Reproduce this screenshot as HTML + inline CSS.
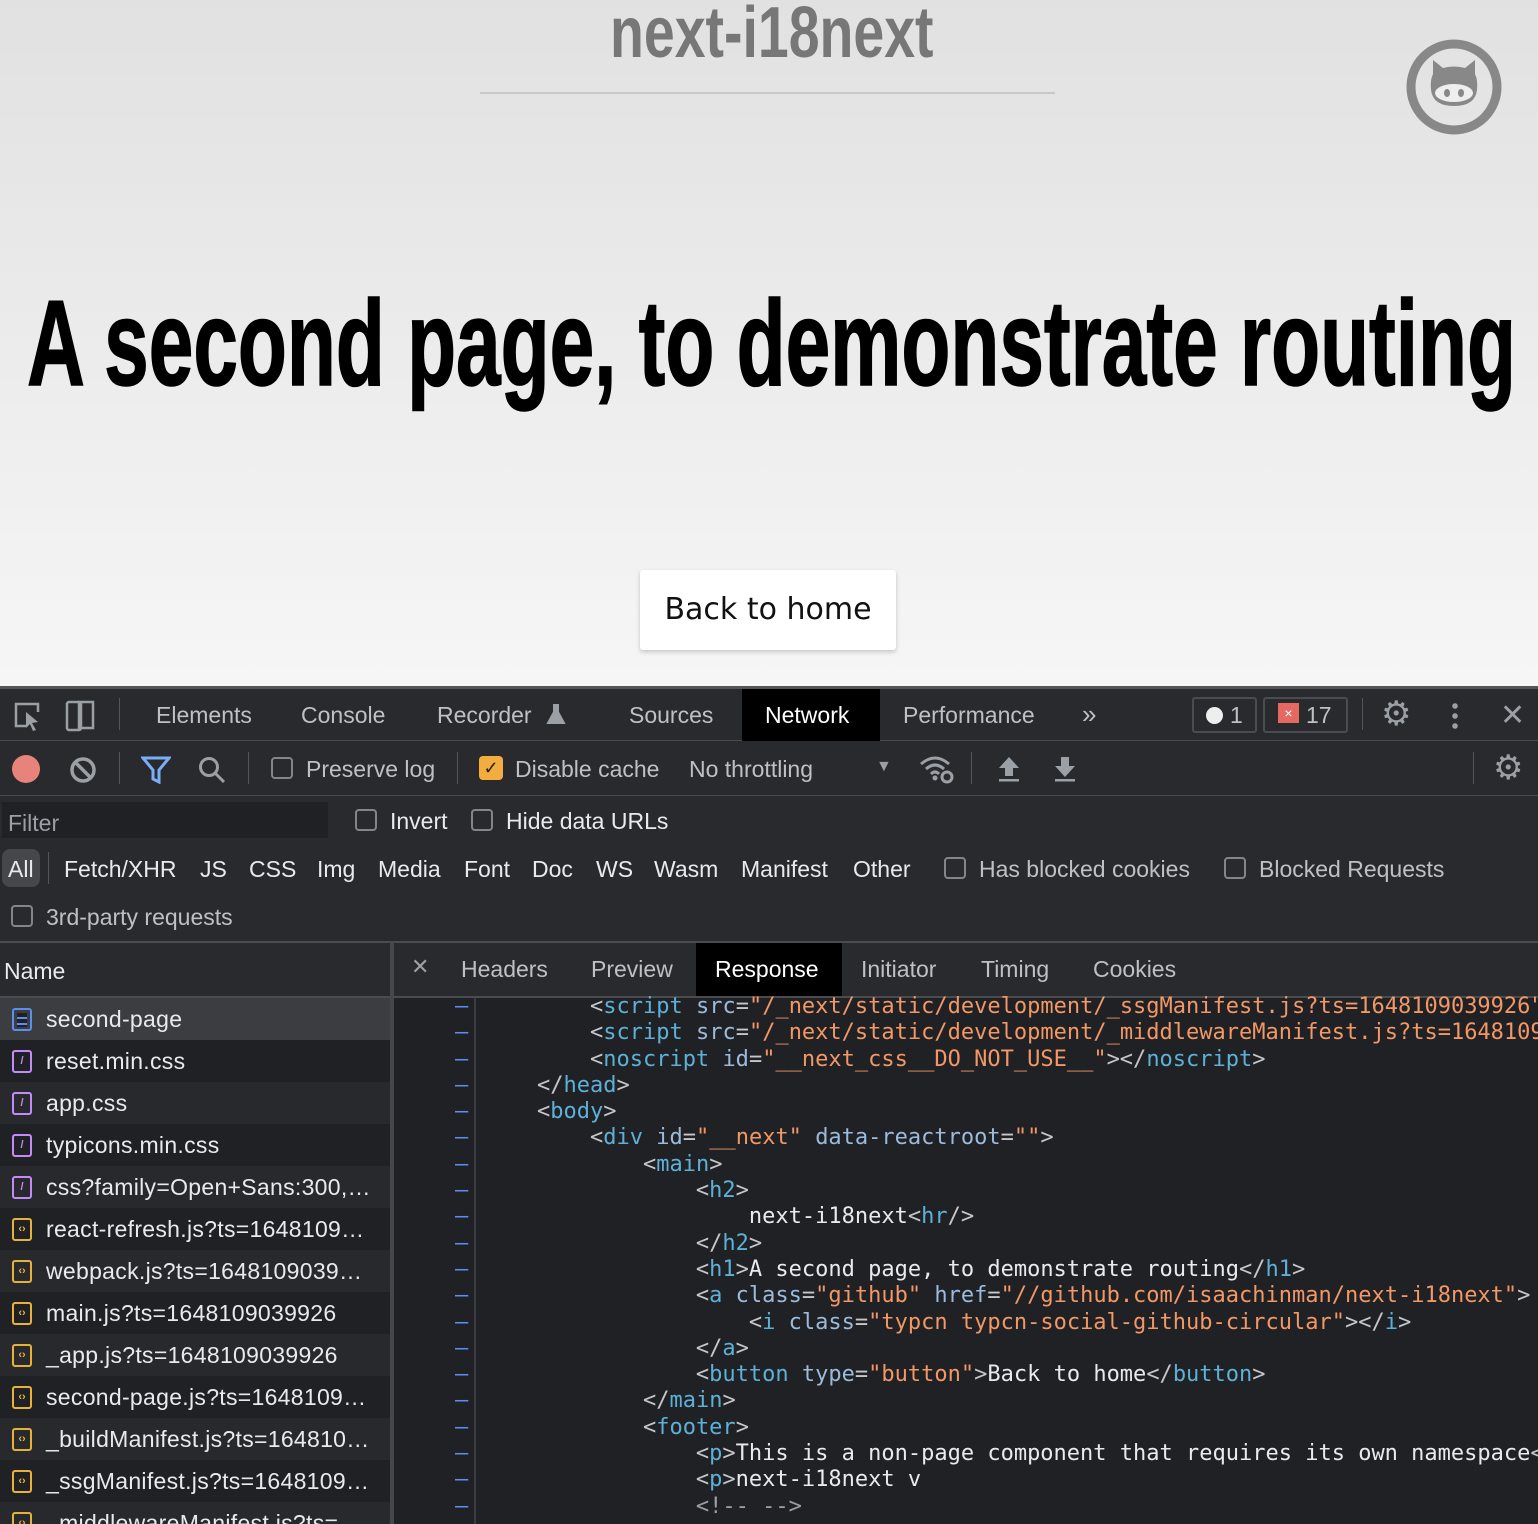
<!DOCTYPE html>
<html><head><meta charset="utf-8"><style>
*{box-sizing:border-box;margin:0;padding:0}
html,body{width:1538px;height:1524px;overflow:hidden}
body{font-family:"Liberation Sans",sans-serif;position:relative;background:#292a2d}
.page{position:absolute;left:0;top:0;width:1538px;height:686px;background:linear-gradient(#e1e1e1,#f6f6f6);overflow:hidden}
.a{position:absolute;white-space:nowrap}
.ui{color:#bdc1c6;font-size:23px}
.cb{position:absolute;width:22px;height:22px;border:2px solid #80868b;border-radius:4px}
.hl{position:absolute;left:0;height:1px;background:#494c50}
.code{position:absolute;left:484px;top:994px;font-family:"DejaVu Sans Mono","Liberation Mono",monospace;font-size:22px;line-height:26.3px;color:#e8eaed;white-space:pre}
.t{color:#5db0d7}.n{color:#9bbbdc}.v{color:#f29766}.p{color:#c5c7ca}
.row{position:absolute;left:0;width:390px;height:42px;font-size:23px;letter-spacing:0.3px;color:#e8eaed;padding-left:46px;line-height:42px;white-space:nowrap;overflow:hidden}
.ic{position:absolute;left:12px;top:10px;width:20px;height:23px;border:2px solid #c58af9;border-radius:3px;font-size:11px;line-height:19px;text-align:center;letter-spacing:0;font-weight:bold}
.ic.c{color:#c58af9}
.ic.j{border-color:#e8b23a;color:#e8b23a}
.ic.d{border-color:#5b8ef0;background:repeating-linear-gradient(#202124 0 4px,#5b8ef0 4px 6px) 3px 3px/10px 14px no-repeat}
</style></head><body>
<div class="page">
 <div class="a" style="left:480px;top:92px;width:575px;height:2px;background:#c8c8c8"></div>
 <div class="a" style="left:610px;top:-8px;font-family:'Liberation Sans',sans-serif;font-weight:bold;font-size:72px;color:#777;transform:scaleX(0.77);transform-origin:left">next-i18next</div>
 <div class="a" style="left:27px;top:273px;font-family:'Liberation Sans',sans-serif;font-weight:bold;font-size:122px;color:#000;transform:scaleX(0.657);transform-origin:left;-webkit-text-stroke:1.5px #000">A second page, to demonstrate routing</div>
 <svg class="a" style="left:1405px;top:38px" width="98" height="98" viewBox="0 0 98 98"><circle cx="49" cy="49" r="43" fill="none" stroke="#888" stroke-width="9"/><path d="M28 36 L28 22 L38 30 Q49 27 60 30 L70 22 L70 36 Q73 42 72 52 Q70 68 49 68 Q28 68 26 52 Q25 42 28 36Z" fill="#888"/><ellipse cx="49" cy="55" rx="19" ry="9" fill="#eee"/><ellipse cx="42" cy="55" rx="3" ry="4" fill="#888"/><ellipse cx="56" cy="55" rx="3" ry="4" fill="#888"/></svg>
 <div class="a" style="left:640px;top:570px;width:256px;height:80px;background:#fff;border-radius:3px;box-shadow:0 2px 5px rgba(0,0,0,.2);font-family:'DejaVu Sans',sans-serif;font-size:30px;line-height:80px;text-align:center;color:#111">Back to home</div>
</div>
<div class="a" style="left:0;top:686px;width:1538px;height:3px;background:#555"></div>
<div class="hl" style="top:740px;width:1538px"></div>
<div class="hl" style="top:795px;width:1538px"></div>
<div class="hl" style="top:941px;width:1538px;height:2px;background:#4a4c50"></div>
<svg class="a" style="left:12px;top:700px" width="90" height="32"><path d="M14 26H4V4h22v8" fill="none" stroke="#9aa0a6" stroke-width="2.5"/><path d="M14 12l12 10-6 1 4 7-3 1-3-7-4 4z" fill="#9aa0a6"/><rect x="55" y="2" width="14" height="28" rx="2" fill="none" stroke="#9aa0a6" stroke-width="2.5"/><rect x="67" y="2" width="14" height="26" fill="none" stroke="#9aa0a6" stroke-width="2.5"/></svg>
<div class="a" style="left:119px;top:698px;width:1px;height:32px;background:#555"></div>
<div class="a ui" style="left:156px;top:702px">Elements</div>
<div class="a ui" style="left:301px;top:702px">Console</div>
<div class="a ui" style="left:437px;top:702px">Recorder</div>
<svg class="a" style="left:546px;top:703px" width="20" height="22"><path d="M7 2h6M8 2v7L2 20h16L12 9V2" fill="#9aa0a6" stroke="#9aa0a6" stroke-width="2"/></svg>
<div class="a ui" style="left:629px;top:702px">Sources</div>
<div class="a" style="left:742px;top:689px;width:138px;height:52px;background:#000"></div>
<div class="a ui" style="left:765px;top:702px;color:#fff">Network</div>
<div class="a ui" style="left:903px;top:702px">Performance</div>
<div class="a ui" style="left:1082px;top:699px;font-size:26px">»</div>
<div class="a" style="left:1192px;top:697px;width:65px;height:36px;border:2px solid #4a4c50;border-radius:3px"></div>
<div class="a" style="left:1206px;top:707px;width:17px;height:17px;border-radius:50%;background:#eee"></div>
<div class="a ui" style="left:1230px;top:702px">1</div>
<div class="a" style="left:1263px;top:697px;width:85px;height:36px;border:2px solid #4a4c50;border-radius:3px"></div>
<div class="a" style="left:1278px;top:703px;width:21px;height:20px;background:#e46962;color:#fff;font-size:14px;text-align:center;line-height:20px">×</div>
<div class="a ui" style="left:1306px;top:702px">17</div>
<div class="a" style="left:1362px;top:698px;width:1px;height:32px;background:#555"></div>
<div class="a" style="left:1381px;top:694px;font-size:34px;color:#9aa0a6">⚙</div>
<div class="a" style="left:1452px;top:701px;width:6px;height:30px;background:radial-gradient(circle,#9aa0a6 2.5px,transparent 3px) 0 0/6px 10px"></div>
<div class="a" style="left:1500px;top:698px;font-size:30px;color:#9aa0a6">✕</div>
<div class="a" style="left:12px;top:755px;width:28px;height:28px;border-radius:50%;background:#e8837c"></div>
<svg class="a" style="left:68px;top:755px" width="30" height="30"><circle cx="15" cy="15" r="11" fill="none" stroke="#9aa0a6" stroke-width="3.5"/><path d="M7 7L23 23" stroke="#9aa0a6" stroke-width="3.5"/></svg>
<div class="a" style="left:119px;top:752px;width:1px;height:32px;background:#555"></div>
<svg class="a" style="left:141px;top:756px" width="30" height="28"><path d="M2 2h26L18 14v12l-6-3V14z" fill="none" stroke="#7cacf8" stroke-width="3"/></svg>
<svg class="a" style="left:197px;top:755px" width="30" height="30"><circle cx="12" cy="12" r="8.5" fill="none" stroke="#9aa0a6" stroke-width="3"/><path d="M18 18l9 9" stroke="#9aa0a6" stroke-width="3"/></svg>
<div class="a" style="left:248px;top:752px;width:1px;height:32px;background:#555"></div>
<div class="cb" style="left:271px;top:757px"></div>
<div class="a ui" style="left:306px;top:756px">Preserve log</div>
<div class="a" style="left:457px;top:752px;width:1px;height:32px;background:#555"></div>
<div class="a" style="left:479px;top:756px;width:24px;height:24px;border-radius:4px;background:#f3ad3f;color:#222;font-size:18px;text-align:center;line-height:24px">✓</div>
<div class="a ui" style="left:515px;top:756px">Disable cache</div>
<div class="a ui" style="left:689px;top:756px">No throttling</div>
<div class="a" style="left:876px;top:758px;font-size:16px;color:#9aa0a6">▼</div>
<svg class="a" style="left:918px;top:752px" width="38" height="32"><path d="M3 12Q17 0 31 12M8 17Q17 9 26 17M13 22Q17 18 21 22" fill="none" stroke="#9aa0a6" stroke-width="3"/><circle cx="17" cy="26" r="2.5" fill="#9aa0a6"/><circle cx="29" cy="25" r="5" fill="none" stroke="#9aa0a6" stroke-width="3"/></svg>
<div class="a" style="left:971px;top:752px;width:1px;height:32px;background:#555"></div>
<svg class="a" style="left:996px;top:755px" width="26" height="28"><path d="M13 2L3 13h6v8h8v-8h6z" fill="#9aa0a6"/><rect x="3" y="24" width="20" height="2.5" fill="#9aa0a6"/></svg>
<svg class="a" style="left:1052px;top:755px" width="26" height="28"><path d="M13 22L3 11h6V2h8v9h6z" fill="#9aa0a6"/><rect x="3" y="24" width="20" height="2.5" fill="#9aa0a6"/></svg>
<div class="a" style="left:1473px;top:752px;width:1px;height:32px;background:#555"></div>
<div class="a" style="left:1493px;top:748px;font-size:34px;color:#9aa0a6">⚙</div>
<div class="a" style="left:2px;top:802px;width:326px;height:36px;background:#202124"></div>
<div class="a ui" style="left:8px;top:810px;color:#9aa0a6">Filter</div>
<div class="cb" style="left:355px;top:809px"></div>
<div class="a ui" style="left:390px;top:808px;color:#e8eaed">Invert</div>
<div class="cb" style="left:471px;top:809px"></div>
<div class="a ui" style="left:506px;top:808px;color:#e8eaed">Hide data URLs</div>
<div class="a" style="left:2px;top:849px;width:38px;height:38px;border-radius:8px;background:#45474a"></div>
<div class="a ui" style="left:8px;top:856px;color:#e8eaed">All</div>
<div class="a" style="left:48px;top:852px;width:1px;height:32px;background:#555"></div>
<div class="a ui" style="left:64px;top:856px;color:#e8eaed">Fetch/XHR</div>
<div class="a ui" style="left:200px;top:856px;color:#e8eaed">JS</div>
<div class="a ui" style="left:249px;top:856px;color:#e8eaed">CSS</div>
<div class="a ui" style="left:317px;top:856px;color:#e8eaed">Img</div>
<div class="a ui" style="left:378px;top:856px;color:#e8eaed">Media</div>
<div class="a ui" style="left:464px;top:856px;color:#e8eaed">Font</div>
<div class="a ui" style="left:532px;top:856px;color:#e8eaed">Doc</div>
<div class="a ui" style="left:596px;top:856px;color:#e8eaed">WS</div>
<div class="a ui" style="left:654px;top:856px;color:#e8eaed">Wasm</div>
<div class="a ui" style="left:741px;top:856px;color:#e8eaed">Manifest</div>
<div class="a ui" style="left:853px;top:856px;color:#e8eaed">Other</div>
<div class="cb" style="left:944px;top:857px"></div>
<div class="a ui" style="left:979px;top:856px">Has blocked cookies</div>
<div class="cb" style="left:1224px;top:857px"></div>
<div class="a ui" style="left:1259px;top:856px">Blocked Requests</div>
<div class="cb" style="left:11px;top:905px"></div>
<div class="a ui" style="left:46px;top:904px">3rd-party requests</div>
<div class="a" style="left:0;top:943px;width:390px;height:54px;background:#292a2d"></div>
<div class="a ui" style="left:4px;top:958px;color:#e8eaed">Name</div>
<div class="hl" style="top:996px;width:1538px;height:2px;background:#4a4c50"></div>
<div class="a" style="left:390px;top:943px;width:4px;height:581px;background:#45474a"></div>
<div class="a" style="left:0;top:998px;width:390px;height:526px;background:#242528"></div>
<div class="row" style="top:998px;background:#3c3d40"><div class="ic d"></div>second-page</div>
<div class="row" style="top:1040px;background:#202124"><div class="ic c">/</div>reset.min.css</div>
<div class="row" style="top:1082px;background:#28292c"><div class="ic c">/</div>app.css</div>
<div class="row" style="top:1124px;background:#202124"><div class="ic c">/</div>typicons.min.css</div>
<div class="row" style="top:1166px;background:#28292c"><div class="ic c">/</div>css?family=Open+Sans:300,…</div>
<div class="row" style="top:1208px;background:#202124"><div class="ic j">‹›</div>react-refresh.js?ts=1648109…</div>
<div class="row" style="top:1250px;background:#28292c"><div class="ic j">‹›</div>webpack.js?ts=1648109039…</div>
<div class="row" style="top:1292px;background:#202124"><div class="ic j">‹›</div>main.js?ts=1648109039926</div>
<div class="row" style="top:1334px;background:#28292c"><div class="ic j">‹›</div>_app.js?ts=1648109039926</div>
<div class="row" style="top:1376px;background:#202124"><div class="ic j">‹›</div>second-page.js?ts=1648109…</div>
<div class="row" style="top:1418px;background:#28292c"><div class="ic j">‹›</div>_buildManifest.js?ts=164810…</div>
<div class="row" style="top:1460px;background:#202124"><div class="ic j">‹›</div>_ssgManifest.js?ts=1648109…</div>
<div class="row" style="top:1502px;height:22px;background:#28292c"><div class="ic j">‹›</div>_middlewareManifest.js?ts=</div>
<div class="a" style="left:394px;top:943px;width:1144px;height:53px;background:#292a2d"></div>
<div class="a" style="left:411px;top:954px;font-size:22px;color:#9aa0a6">✕</div>
<div class="a ui" style="left:461px;top:956px">Headers</div>
<div class="a ui" style="left:591px;top:956px">Preview</div>
<div class="a" style="left:696px;top:943px;width:146px;height:53px;background:#000"></div>
<div class="a ui" style="left:715px;top:956px;color:#fff">Response</div>
<div class="a ui" style="left:861px;top:956px">Initiator</div>
<div class="a ui" style="left:981px;top:956px">Timing</div>
<div class="a ui" style="left:1093px;top:956px">Cookies</div>
<div class="a" style="left:394px;top:998px;width:1144px;height:526px;background:#202124;overflow:hidden"></div>
<div class="a" style="left:474px;top:998px;width:2px;height:526px;background:#3c3d40"></div>
<div class="a" style="left:455px;top:994px;font-family:'DejaVu Sans Mono',monospace;font-size:22px;line-height:26.3px;color:#5b8ef0;white-space:pre">–
–
–
–
–
–
–
–
–
–
–
–
–
–
–
–
–
–
–
–</div>
<div class="code">        <span class="p">&lt;</span><span class="t">script</span> <span class="n">src</span><span class="p">=</span><span class="v">"/_next/static/development/_ssgManifest.js?ts=1648109039926"</span>
        <span class="p">&lt;</span><span class="t">script</span> <span class="n">src</span><span class="p">=</span><span class="v">"/_next/static/development/_middlewareManifest.js?ts=1648109</span>
        <span class="p">&lt;</span><span class="t">noscript</span> <span class="n">id</span><span class="p">=</span><span class="v">"__next_css__DO_NOT_USE__"</span><span class="p">&gt;&lt;/</span><span class="t">noscript</span><span class="p">&gt;</span>
    <span class="p">&lt;/</span><span class="t">head</span><span class="p">&gt;</span>
    <span class="p">&lt;</span><span class="t">body</span><span class="p">&gt;</span>
        <span class="p">&lt;</span><span class="t">div</span> <span class="n">id</span><span class="p">=</span><span class="v">"__next"</span> <span class="n">data-reactroot</span><span class="p">=</span><span class="v">""</span><span class="p">&gt;</span>
            <span class="p">&lt;</span><span class="t">main</span><span class="p">&gt;</span>
                <span class="p">&lt;</span><span class="t">h2</span><span class="p">&gt;</span>
                    next-i18next<span class="p">&lt;</span><span class="t">hr</span><span class="p">/&gt;</span>
                <span class="p">&lt;/</span><span class="t">h2</span><span class="p">&gt;</span>
                <span class="p">&lt;</span><span class="t">h1</span><span class="p">&gt;</span>A second page, to demonstrate routing<span class="p">&lt;/</span><span class="t">h1</span><span class="p">&gt;</span>
                <span class="p">&lt;</span><span class="t">a</span> <span class="n">class</span><span class="p">=</span><span class="v">"github"</span> <span class="n">href</span><span class="p">=</span><span class="v">"//github.com/isaachinman/next-i18next"</span><span class="p">&gt;</span>
                    <span class="p">&lt;</span><span class="t">i</span> <span class="n">class</span><span class="p">=</span><span class="v">"typcn typcn-social-github-circular"</span><span class="p">&gt;&lt;/</span><span class="t">i</span><span class="p">&gt;</span>
                <span class="p">&lt;/</span><span class="t">a</span><span class="p">&gt;</span>
                <span class="p">&lt;</span><span class="t">button</span> <span class="n">type</span><span class="p">=</span><span class="v">"button"</span><span class="p">&gt;</span>Back to home<span class="p">&lt;/</span><span class="t">button</span><span class="p">&gt;</span>
            <span class="p">&lt;/</span><span class="t">main</span><span class="p">&gt;</span>
            <span class="p">&lt;</span><span class="t">footer</span><span class="p">&gt;</span>
                <span class="p">&lt;</span><span class="t">p</span><span class="p">&gt;</span>This is a non-page component that requires its own namespace<span class="p">&lt;</span>
                <span class="p">&lt;</span><span class="t">p</span><span class="p">&gt;</span>next-i18next v
                <span class="p" style="color:#9aa0a6">&lt;!-- --&gt;</span></div>
</body></html>
